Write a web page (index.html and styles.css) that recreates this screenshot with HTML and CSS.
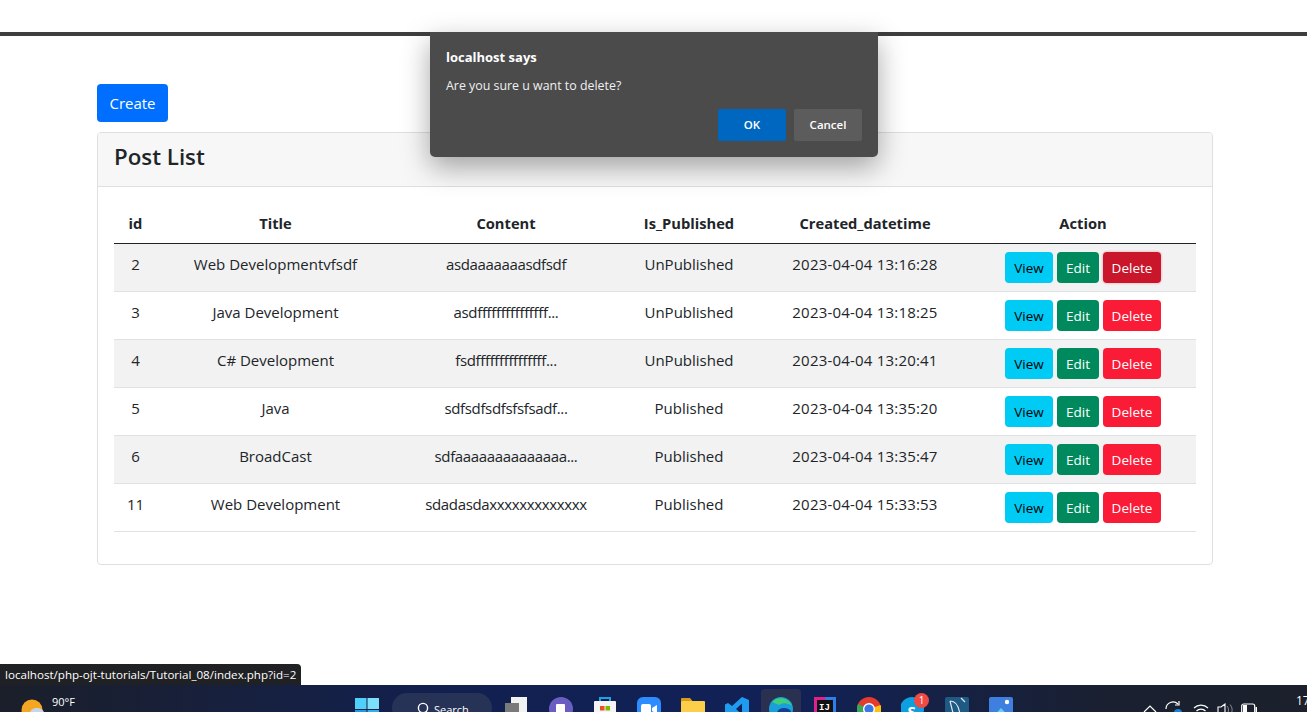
FILE: index.html
```html
<!DOCTYPE html>
<html lang="en">
<head>
    <meta charset="UTF-8">
    <meta name="viewport" content="width=device-width, initial-scale=1.0">
    <title>Post List</title>
    <link rel="stylesheet" href="styles.css">
</head>
<body>
    <div class="top-bar"></div>

    <div class="container">
        <a href="#" class="btn btn-create">Create</a>
        <div class="card">
            <div class="card-header">Post List</div>
            <div class="card-body">
                <table>
                    <thead>
                        <tr>
                            <th class="col-id">id</th>
                            <th class="col-title">Title</th>
                            <th class="col-content">Content</th>
                            <th class="col-pub">Is_Published</th>
                            <th class="col-date">Created_datetime</th>
                            <th class="col-action">Action</th>
                        </tr>
                    </thead>
                    <tbody>
                        <tr>
                            <td>2</td><td>Web Developmentvfsdf</td><td class="content">asdaaaaaaasdfsdf</td><td>UnPublished</td><td class="date">2023-04-04 13:16:28</td>
                            <td class="actions"><a class="btn btn-view">View</a><a class="btn btn-edit">Edit</a><a class="btn btn-delete is-active">Delete</a></td>
                        </tr>
                        <tr>
                            <td>3</td><td>Java Development</td><td class="content">asdfffffffffffffff...</td><td>UnPublished</td><td class="date">2023-04-04 13:18:25</td>
                            <td class="actions"><a class="btn btn-view">View</a><a class="btn btn-edit">Edit</a><a class="btn btn-delete">Delete</a></td>
                        </tr>
                        <tr>
                            <td>4</td><td>C# Development</td><td class="content">fsdfffffffffffffff...</td><td>UnPublished</td><td class="date">2023-04-04 13:20:41</td>
                            <td class="actions"><a class="btn btn-view">View</a><a class="btn btn-edit">Edit</a><a class="btn btn-delete">Delete</a></td>
                        </tr>
                        <tr>
                            <td>5</td><td>Java</td><td class="content">sdfsdfsdfsfsfsadf...</td><td>Published</td><td class="date">2023-04-04 13:35:20</td>
                            <td class="actions"><a class="btn btn-view">View</a><a class="btn btn-edit">Edit</a><a class="btn btn-delete">Delete</a></td>
                        </tr>
                        <tr>
                            <td>6</td><td>BroadCast</td><td class="content">sdfaaaaaaaaaaaaaa...</td><td>Published</td><td class="date">2023-04-04 13:35:47</td>
                            <td class="actions"><a class="btn btn-view">View</a><a class="btn btn-edit">Edit</a><a class="btn btn-delete">Delete</a></td>
                        </tr>
                        <tr>
                            <td>11</td><td>Web Development</td><td class="content">sdadasdaxxxxxxxxxxxxx</td><td>Published</td><td class="date">2023-04-04 15:33:53</td>
                            <td class="actions"><a class="btn btn-view">View</a><a class="btn btn-edit">Edit</a><a class="btn btn-delete">Delete</a></td>
                        </tr>
                    </tbody>
                </table>
            </div>
        </div>
    </div>

    <div class="spacer"></div>

    <!-- browser alert over the page -->
    <div class="dialog">
        <div class="dialog-title">localhost says</div>
        <div class="dialog-text">Are you sure u want to delete?</div>
        <div class="dialog-buttons">
            <span class="dialog-btn dialog-ok">OK</span>
            <span class="dialog-btn dialog-cancel">Cancel</span>
        </div>
    </div>

    <div class="status-bubble">localhost/php-ojt-tutorials/Tutorial_08/index.php?id=2</div>

    <div class="taskbar">
        <div class="weather">
            <svg class="weather-icon" width="24" height="24" viewBox="0 0 24 24">
                <circle cx="11" cy="11" r="10.5" fill="#f5a623"/>
                <ellipse cx="16" cy="14" rx="7" ry="5" fill="#c9d6e8"/>
            </svg>
            <span class="weather-temp">90°F</span>
        </div>

        <div class="task-icons">
            <svg class="task-icon" width="24" height="24" viewBox="0 0 24 24">
                <rect x="0" y="1" width="11.5" height="11" fill="#4fd0fa"/>
                <rect x="12.5" y="1" width="11.5" height="11" fill="#7de0fb"/>
                <rect x="0" y="13" width="11.5" height="11" fill="#1e9be0"/>
                <rect x="12.5" y="13" width="11.5" height="11" fill="#35aeea"/>
            </svg>
            <div class="search-pill">
                <svg width="13" height="13" viewBox="0 0 13 13">
                    <circle cx="6" cy="6" r="4.6" fill="none" stroke="#fff" stroke-width="1.4"/>
                    <path d="M9 9.5l2.6 3" stroke="#fff" stroke-width="1.4"/>
                </svg>
                <span>Search</span>
            </div>
            <div class="task-apps">
                <svg class="task-icon" width="24" height="24" viewBox="0 0 24 24">
                    <rect x="6" y="0" width="16" height="22" fill="#f2f2f2"/>
                    <rect x="0" y="6" width="14" height="16" fill="#7a7a7a"/>
                </svg>
                <svg class="task-icon" width="24" height="24" viewBox="0 0 24 24">
                    <circle cx="12" cy="12" r="12" fill="#6a5fc1"/>
                    <rect x="7" y="7" width="9" height="14" rx="1" fill="#fff"/>
                </svg>
                <svg class="task-icon" width="24" height="24" viewBox="0 0 24 24">
                    <path d="M7 6V1h10v5" fill="none" stroke="#1aa3e8" stroke-width="2"/>
                    <rect x="1" y="4" width="22" height="20" rx="1" fill="#f4f4f4"/>
                    <rect x="7" y="9" width="4.5" height="4.5" fill="#e8502a"/>
                    <rect x="12.5" y="9" width="4.5" height="4.5" fill="#7fba00"/>
                </svg>
                <svg class="task-icon" width="24" height="24" viewBox="0 0 24 24">
                    <rect x="0" y="0" width="24" height="24" rx="6" fill="#2d8cff"/>
                    <rect x="4" y="7" width="10" height="10" rx="2" fill="#fff"/>
                    <path d="M15 11l5-3v9l-5-3z" fill="#fff"/>
                </svg>
                <svg class="task-icon" width="24" height="24" viewBox="0 0 24 24">
                    <path d="M0 2a1 1 0 0 1 1-1h8l3 3.5H0z" fill="#d99a1c"/>
                    <rect x="0" y="4" width="24" height="20" rx="1" fill="#fbcf4a"/>
                </svg>
                <svg class="task-icon" width="24" height="24" viewBox="0 0 24 24">
                    <path d="M17 0l7 3v18l-7 3L7 15l-4 3-3-1.500V7.500L3 6l4 3zM17 6.500L11 12l6 5.500z" fill="#1f9cf0" fill-rule="evenodd"/>
                </svg>
                <div class="task-active">
                    <svg width="24" height="24" viewBox="0 0 24 24">
                        <circle cx="12" cy="12" r="12" fill="#1a9fd8"/>
                        <path d="M3 5a12 12 0 0 1 20 4c-3-3-9-4-13-1z" fill="#3fcf7a"/>
                        <path d="M9 22c-3-6 0-11 6-11 3 0 5 1 7 3-2 6-8 10-13 8z" fill="#0f3f96"/>
                    </svg>
                </div>
                <svg class="task-icon" width="24" height="24" viewBox="0 0 24 24">
                    <rect x="1" y="0" width="22" height="24" fill="#e0218a"/>
                    <path d="M12 0h11v24H16z" fill="#2f7fe8"/>
                    <rect x="4" y="3" width="16" height="18" fill="#111"/>
                    <text x="6" y="13" class="ij-text">IJ</text>
                </svg>
                <svg class="task-icon" width="24" height="24" viewBox="0 0 24 24">
                    <circle cx="12" cy="12" r="12" fill="#e33b2e"/>
                    <path d="M12 12L1 7A12 12 0 0 0 9 23.600z" fill="#3aa757"/>
                    <path d="M12 12L9 23.600A12 12 0 0 0 23.600 8z" fill="#fbc116"/>
                    <circle cx="12" cy="12" r="6" fill="#fff"/>
                    <circle cx="12" cy="12" r="4.600" fill="#3b78e7"/>
                </svg>
                <div class="task-badge-wrap">
                    <svg width="24" height="24" viewBox="0 0 24 24">
                        <circle cx="11" cy="12" r="12" fill="#0d9fe0"/>
                        <text x="6.500" y="20" class="skype-text">S</text>
                    </svg>
                    <span class="badge">1</span>
                </div>
                <svg class="task-icon" width="24" height="24" viewBox="0 0 24 24">
                    <rect x="0" y="0" width="24" height="24" rx="2" fill="#1f5a84"/>
                    <path d="M5 4c6 0 9 5 10 14M5 4l4 16M16 1l4 4" fill="none" stroke="#dfe8ef" stroke-width="1.200"/>
                </svg>
                <svg class="task-icon" width="24" height="24" viewBox="0 0 24 24">
                    <rect x="0" y="0" width="24" height="24" rx="2" fill="#3f7fe0"/>
                    <path d="M2 22l10-11 10 11z" fill="#66d0f0"/>
                    <circle cx="18" cy="5" r="2.200" fill="#fff"/>
                </svg>
            </div>
        </div>

        <div class="tray">
            <svg class="tray-chevron" width="14" height="10" viewBox="0 0 14 10"><path d="M1 8l6-6 6 6" fill="none" stroke="#fff" stroke-width="1.200"/></svg>
            <svg class="tray-sync" width="20" height="20" viewBox="0 0 20 20">
                <path d="M13 3a7 7 0 0 0-12 5" fill="none" stroke="#fff" stroke-width="1.200"/>
                <path d="M14 0v4h-4" fill="none" stroke="#fff" stroke-width="1.200"/>
                <circle cx="13" cy="12" r="4" fill="#1a7fe0"/>
            </svg>
            <svg class="tray-item" width="16" height="16" viewBox="0 0 16 16">
                <path d="M1 5a10 10 0 0 1 14 0M3.500 8a6.500 6.500 0 0 1 9 0M6 11a3 3 0 0 1 4 0" fill="none" stroke="#fff" stroke-width="1.200"/>
            </svg>
            <svg class="tray-item" width="16" height="16" viewBox="0 0 16 16">
                <path d="M1 4h3l4-3v12l-4-3H1z" fill="none" stroke="#fff" stroke-width="1.100"/>
                <path d="M10 3a6 6 0 0 1 0 8M13 1.500a8 8 0 0 1 0 11" fill="none" stroke="#888" stroke-width="1"/>
            </svg>
            <svg class="tray-item" width="16" height="16" viewBox="0 0 16 16">
                <rect x="0.700" y="1" width="13" height="12" rx="2" fill="none" stroke="#fff" stroke-width="1.200"/>
                <rect x="2" y="2" width="4" height="10" fill="#fff"/>
                <rect x="14.500" y="4" width="1.500" height="5" fill="#fff"/>
            </svg>
            <span class="clock">17</span>
        </div>
    </div>
</body>
</html>
```

FILE: styles.css
```css
html, body {
    margin: 0;
    padding: 0;
    height: 712px;
    overflow: hidden;
}
body {
    font-family: 'Open Sans', 'Noto Sans', sans-serif;
    background-color: #ffffff;
    color: #212529;
    font-size: 15px;
    display: flex;
    flex-direction: column;
    position: relative;
}
.top-bar {
    height: 32px;
    border-bottom: 4px solid #3e3e3e;
    flex: none;
}
.container {
    width: 1116px;
    margin: 48px 0 0 97px;
}
.btn {
    display: inline-block;
    box-sizing: border-box;
    border-radius: 4px;
    text-align: center;
    text-decoration: none;
}
.btn-create {
    width: 71px;
    height: 38px;
    line-height: 38px;
    font-size: 15px;
    background-color: #006fff;
    color: #ffffff;
    display: block;
}
.card {
    margin-top: 10px;
    height: 433px;
    box-sizing: border-box;
    border: 1px solid #dfdfdf;
    border-radius: 4px;
}
.card-header {
    height: 53px;
    line-height: 48px;
    padding: 0 16px;
    font-size: 22.3px;
    font-weight: 600;
    background-color: #f7f7f7;
    border-bottom: 1px solid #dfdfdf;
    border-radius: 3px 3px 0 0;
}
.card-body {
    padding: 16px;
}
table {
    width: 100%;
    border-collapse: collapse;
    table-layout: fixed;
    font-size: 15px;
}
thead th {
    height: 40px;
    padding: 0;
    font-weight: 700;
    font-size: 14.7px;
    text-align: center;
    border-bottom: 1px solid #212529;
}
.col-id { width: 43px; }
.col-title { width: 237px; }
.col-content { width: 224px; }
.col-pub { width: 142px; }
.col-date { width: 210px; }
tbody td {
    height: 48px;
    padding: 8px 0 0;
    line-height: 24px;
    box-sizing: border-box;
    text-align: center;
    vertical-align: top;
    border-bottom: 1px solid #dee2e6;
    white-space: nowrap;
}
tbody tr:nth-child(odd) {
    background-color: #f2f2f2;
}
tbody td.content {
    letter-spacing: -0.35px;
}
tbody td.date {
    letter-spacing: 0.2px;
}
tbody td.actions {
    font-size: 0;
    text-align: left;
    padding-left: 35px;
}
.actions .btn {
    height: 31px;
    line-height: 33px;
    font-size: 13.5px;
    margin-right: 4px;
    vertical-align: top;
}
.btn-view {
    width: 48px;
    background-color: #00cbf5;
    color: #000000;
}
.btn-edit {
    width: 42px;
    background-color: #00895c;
    color: #ffffff;
}
.btn-delete {
    width: 58px;
    background-color: #fa1b36;
    color: #ffffff;
}
.btn-delete.is-active {
    background-color: #c9162b;
    box-shadow: 0 0 0 1.5px #f2d5da;
}
.spacer {
    flex: 1;
}
.dialog {
    position: absolute;
    left: 430px;
    top: 32px;
    width: 448px;
    height: 125px;
    box-sizing: border-box;
    padding: 16px 16px 0;
    background-color: #4b4b4b;
    border-radius: 0 0 5px 5px;
    box-shadow: 0 10px 28px rgba(0, 0, 0, 0.35);
    color: #ffffff;
    font-size: 12.4px;
}
.dialog-title {
    font-weight: 700;
    font-size: 13px;
    line-height: 18px;
}
.dialog-text {
    margin-top: 11px;
    line-height: 18px;
    color: #f0f0f0;
}
.dialog-buttons {
    display: flex;
    justify-content: flex-end;
    gap: 8px;
    margin-top: 14px;
}
.dialog-btn {
    width: 68px;
    height: 32px;
    line-height: 32px;
    text-align: center;
    border-radius: 2px;
    font-weight: 600;
    font-size: 11.5px;
}
.dialog-ok {
    background-color: #0067c0;
}
.dialog-cancel {
    background-color: #5c5c5c;
}
.status-bubble {
    position: absolute;
    left: 0;
    top: 664px;
    width: 301px;
    height: 21px;
    box-sizing: border-box;
    line-height: 21px;
    padding-left: 5px;
    font-size: 11.6px;
    color: #ffffff;
    background-color: #202124;
    border-radius: 0 4px 0 0;
    white-space: nowrap;
}
.taskbar {
    flex: none;
    height: 27px;
    background: linear-gradient(90deg, #1b1f2a 0%, #122050 35%, #112157 60%, #1a2030 85%, #1b202c 100%);
    position: relative;
    overflow: hidden;
    color: #ffffff;
}
.weather {
    position: absolute;
    left: 21px;
    top: 0;
    display: flex;
    gap: 7px;
}
.weather-icon {
    margin-top: 14px;
}
.weather-temp {
    font-size: 11px;
    line-height: 17px;
    margin-top: 8px;
}
.task-icons {
    position: absolute;
    left: 355px;
    top: 0;
    display: flex;
    align-items: flex-start;
}
.task-icons svg {
    flex: none;
}
.task-icon {
    margin-top: 12px;
}
.search-pill {
    margin: 8px 13px 0 13px;
    width: 100px;
    height: 30px;
    flex: none;
    box-sizing: border-box;
    padding: 9px 0 0 25px;
    border-radius: 15px;
    background-color: #273356;
    display: flex;
    gap: 4px;
    font-size: 11px;
}
.task-apps {
    display: flex;
    align-items: flex-start;
    gap: 20px;
}
.task-active {
    width: 40px;
    height: 40px;
    margin: 4px -8px 0;
    border-radius: 4px;
    background-color: #2a3150;
    text-align: center;
}
.task-active svg {
    margin-top: 8px;
}
.task-badge-wrap {
    position: relative;
    margin-top: 12px;
    width: 24px;
}
.badge {
    position: absolute;
    left: 13px;
    top: -4px;
    width: 15px;
    height: 15px;
    line-height: 15px;
    border-radius: 50%;
    background-color: #f04a45;
    font-size: 10px;
    text-align: center;
}
.ij-text {
    font-family: 'Liberation Mono', monospace;
    font-size: 9px;
    font-weight: 700;
    fill: #ffffff;
}
.skype-text {
    font-family: 'Open Sans', sans-serif;
    font-size: 15px;
    font-weight: 700;
    fill: #ffffff;
}
.tray {
    position: absolute;
    left: 1143px;
    top: 0;
    display: flex;
    align-items: flex-start;
    gap: 8px;
}
.tray-chevron {
    margin-top: 19px;
}
.tray-sync {
    margin-top: 16px;
}
.tray-item {
    margin-top: 18px;
}
.clock {
    font-size: 12px;
    line-height: 16px;
    margin: 8px 0 0 31px;
}
```
